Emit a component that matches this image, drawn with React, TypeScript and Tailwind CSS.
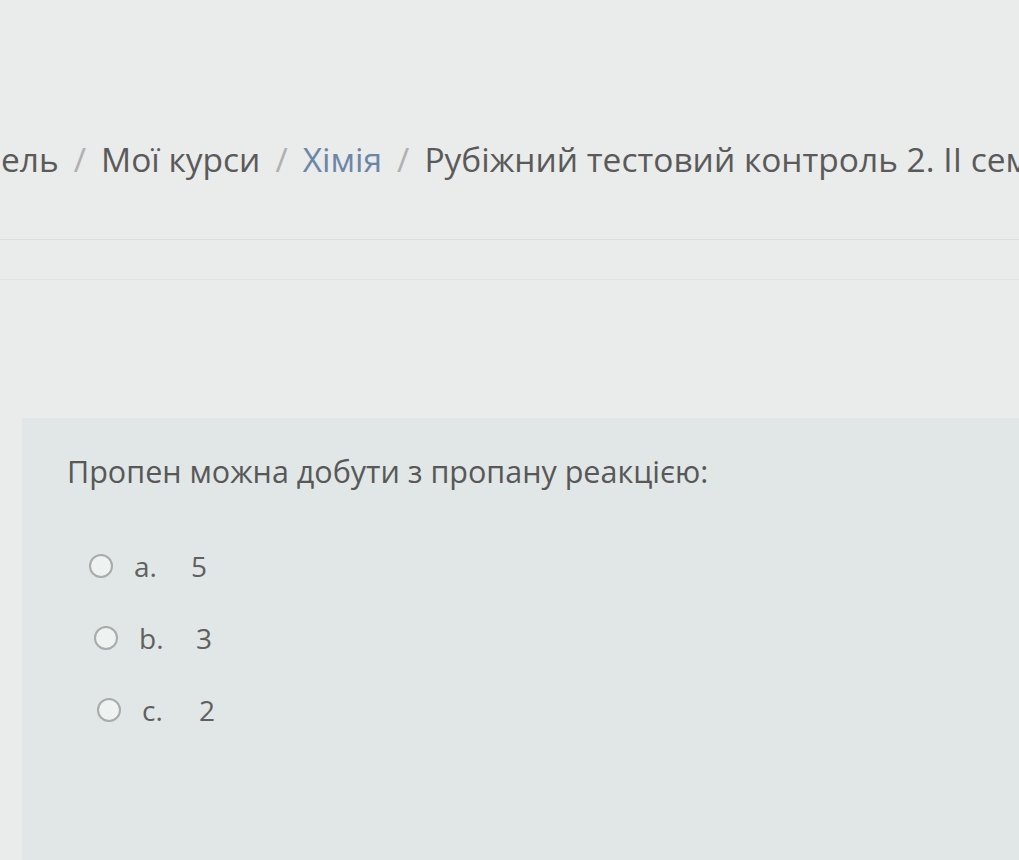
import React from "react";

function Radio() {
  return (
    <span className="inline-block w-[24px] h-[24px] rounded-full border-2 border-[#a7acab] bg-[#eef2f1] shrink-0" />
  );
}

export default function App() {
  const opts = [
    { l: "a.", v: "5", ml: "ml-[22px]" },
    { l: "b.", v: "3", ml: "ml-[27px]" },
    { l: "c.", v: "2", ml: "ml-[30px]" },
  ];
  return (
    <div
      className="w-[1019px] h-[860px] overflow-hidden bg-[#eaebeb] flex flex-col"
      style={{ fontFamily: '"Open Sans", "Noto Sans", sans-serif' }}
    >
      <div className="pt-[137px] h-[240px] border-b border-[#dcdedd] whitespace-nowrap overflow-hidden text-[33.5px] leading-[44px] text-[#5a5a5a] pl-[1px]">
        <span>ель</span>
        <span className="text-[#b0b0b0] mx-[15px]">/</span>
        <span>Мої курси</span>
        <span className="text-[#b0b0b0] mx-[15px]">/</span>
        <span className="text-[#6d86a8]">Хімія</span>
        <span className="text-[#b0b0b0] mx-[15px]">/</span>
        <span>Рубіжний тестовий контроль 2. II семестр</span>
      </div>
      <div className="h-[40px] border-b border-[#e0e1e1]" />
      <div className="h-[138px]" />
      <div className="flex-1 ml-[22px] bg-[#e1e7e6] pl-[45px] pt-[33px]">
        <div className="text-[30.5px] leading-[40px] text-[#585858]">
          Пропен можна добути з пропану реакцією:
        </div>
        <div className="mt-[56px] flex flex-col gap-[34px]">
          {opts.map((o) => (
            <div key={o.l} className={`flex items-center h-[38px] ${o.ml}`}>
              <Radio />
              <span className="ml-[21px] text-[28px] text-[#606060] w-[57px]">{o.l}</span>
              <span className="text-[28px] text-[#606060]">{o.v}</span>
            </div>
          ))}
        </div>
      </div>
    </div>
  );
}
